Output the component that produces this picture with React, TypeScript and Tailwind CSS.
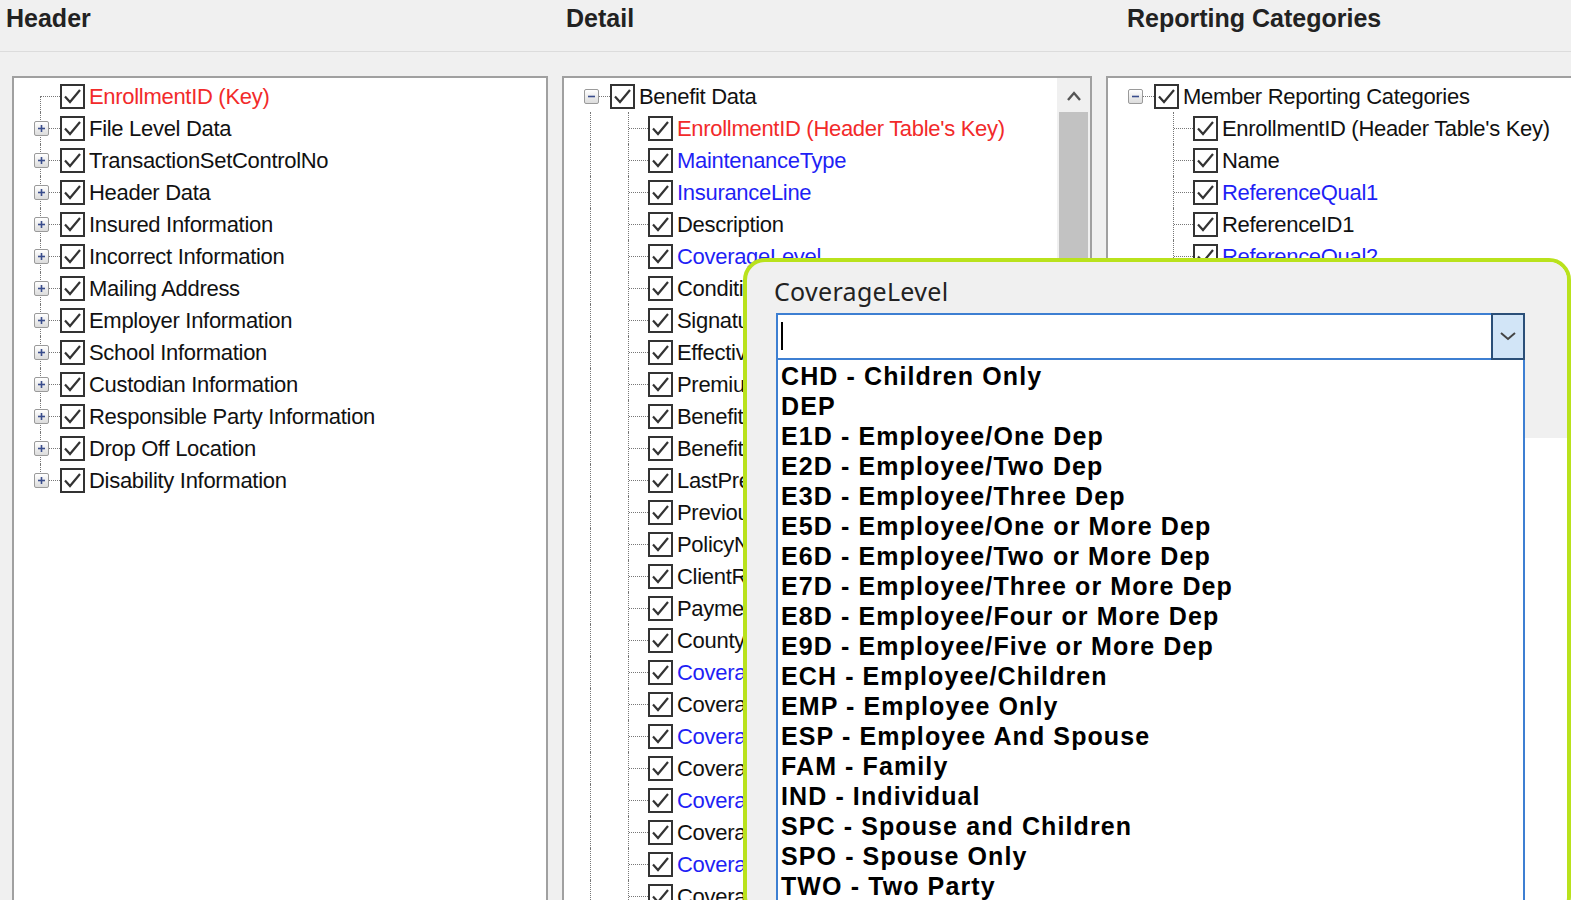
import React from 'react';

type Node = { label: string; color?: 'red' | 'blue'; children?: Node[]; expander?: '+' | '-' | null };

const HEADER: Node[] = [
  { label: 'EnrollmentID (Key)', color: 'red', expander: null },
  { label: 'File Level Data', expander: '+' },
  { label: 'TransactionSetControlNo', expander: '+' },
  { label: 'Header Data', expander: '+' },
  { label: 'Insured Information', expander: '+' },
  { label: 'Incorrect Information', expander: '+' },
  { label: 'Mailing Address', expander: '+' },
  { label: 'Employer Information', expander: '+' },
  { label: 'School Information', expander: '+' },
  { label: 'Custodian Information', expander: '+' },
  { label: 'Responsible Party Information', expander: '+' },
  { label: 'Drop Off Location', expander: '+' },
  { label: 'Disability Information', expander: '+' },
];

const DETAIL: Node[] = [
  { label: "EnrollmentID (Header Table's Key)", color: 'red' },
  { label: 'MaintenanceType', color: 'blue' },
  { label: 'InsuranceLine', color: 'blue' },
  { label: 'Description' },
  { label: 'CoverageLevel', color: 'blue' },
  { label: 'ConditionCode' },
  { label: 'SignatureDate' },
  { label: 'EffectiveDate' },
  { label: 'PremiumAmount' },
  { label: 'BenefitBeginDate' },
  { label: 'BenefitEndDate' },
  { label: 'LastPremiumPaidDate' },
  { label: 'PreviousPolicyNumber' },
  { label: 'PolicyNumber' },
  { label: 'ClientReportingCategory' },
  { label: 'PaymentPlan' },
  { label: 'CountyCode' },
  { label: 'CoverageLevelQual1', color: 'blue' },
  { label: 'CoverageLevelID1' },
  { label: 'CoverageLevelQual2', color: 'blue' },
  { label: 'CoverageLevelID2' },
  { label: 'CoverageLevelQual3', color: 'blue' },
  { label: 'CoverageLevelID3' },
  { label: 'CoverageLevelQual4', color: 'blue' },
  { label: 'CoverageLevelID4' },
];

const REPORTING: Node[] = [
  { label: "EnrollmentID (Header Table's Key)" },
  { label: 'Name' },
  { label: 'ReferenceQual1', color: 'blue' },
  { label: 'ReferenceID1' },
  { label: 'ReferenceQual2', color: 'blue' },
  { label: 'ReferenceID2' },
  { label: 'ReferenceQual3', color: 'blue' },
];

const OPTIONS = [
  'CHD - Children Only',
  'DEP',
  'E1D - Employee/One Dep',
  'E2D - Employee/Two Dep',
  'E3D - Employee/Three Dep',
  'E5D - Employee/One or More Dep',
  'E6D - Employee/Two or More Dep',
  'E7D - Employee/Three or More Dep',
  'E8D - Employee/Four or More Dep',
  'E9D - Employee/Five or More Dep',
  'ECH - Employee/Children',
  'EMP - Employee Only',
  'ESP - Employee And Spouse',
  'FAM - Family',
  'IND - Individual',
  'SPC - Spouse and Children',
  'SPO - Spouse Only',
  'TWO - Two Party',
];

function Check() {
  return (
    <div className="w-[25px] h-[25px] shrink-0 border-2 border-[#333] bg-white flex items-center justify-center">
      <svg width="19" height="19" viewBox="0 0 19 19">
        <path d="M2 9.5 L7 15 L17 3" fill="none" stroke="#333" strokeWidth="2.2" />
      </svg>
    </div>
  );
}

function Expander({ sign }: { sign: '+' | '-' }) {
  return (
    <div className="w-[15px] h-[15px] border border-[#9a9a9a] rounded-[2px] bg-gradient-to-b from-white to-[#dcdcdc] flex items-center justify-center relative z-10">
      <svg width="9" height="9" viewBox="0 0 9 9">
        <path d="M1 4.5 H8" stroke="#3a4d8c" strokeWidth="1.6" />
        {sign === '+' && <path d="M4.5 1 V8" stroke="#3a4d8c" strokeWidth="1.6" />}
      </svg>
    </div>
  );
}

// slot with tree lines: vertical dotted line + horizontal connector
function Slot({ v, sign, w = 'w-[22px]' }: { v: 'full' | 'bottom' | 'top' | 'none'; sign?: '+' | '-' | null; w?: string }) {
  return (
    <div className={'relative h-8 shrink-0 flex items-center ' + w}>
      {v !== 'none' && (
        <div
          className={
            'absolute left-[10px] border-l border-dotted border-[#777] ' +
            (v === 'full' ? 'top-0 bottom-0' : v === 'bottom' ? 'top-1/2 bottom-0' : 'top-0 bottom-1/2')
          }
        />
      )}
      <div className="absolute left-[11px] right-0 top-1/2 border-t border-dotted border-[#777]" />
      {sign && (
        <div className="w-[22px] flex justify-center">
          <Expander sign={sign} />
        </div>
      )}
    </div>
  );
}

function Label({ n }: { n: Node }) {
  const c = n.color === 'red' ? 'text-[#f22a2a]' : n.color === 'blue' ? 'text-[#1f1ff5]' : 'text-[#111]';
  return <span className={'ml-[4px] whitespace-nowrap tracking-[-0.3px] ' + c}>{n.label}</span>;
}

function Row({ children }: { children: React.ReactNode }) {
  return <div className="flex items-center h-8">{children}</div>;
}

function VLine() {
  return (
    <div className="relative w-[22px] h-8 shrink-0">
      <div className="absolute left-[10px] top-0 bottom-0 border-l border-dotted border-[#777]" />
    </div>
  );
}

const treeFont = { fontFamily: '"Liberation Sans", Arial, sans-serif' };

export default function App() {
  return (
    <div className="w-[1571px] h-[900px] bg-[#f0f0f0] overflow-hidden relative text-[22px]" style={treeFont}>
      <div className="flex h-[52px] items-start font-bold text-[25px] text-[#222] border-b border-[#dcdcdc]">
        <div className="w-[560px] pl-[6px]">Header</div>
        <div className="w-[560px] pl-[6px]">Detail</div>
        <div className="pl-[7px]">Reporting Categories</div>
      </div>

      <div className="flex pt-[24px] gap-[14px] pl-[12px]">
        {/* Header panel */}
        <div className="w-[536px] h-[830px] border-2 border-[#a0a0a0] bg-white pl-[16px] pt-[2px]">
          {HEADER.map((n, i) => (
            <Row key={i}>
              <Slot v={i === 0 ? 'bottom' : i === HEADER.length - 1 ? 'top' : 'full'} sign={n.expander} w="w-[30px]" />
              <Check />
              <Label n={n} />
            </Row>
          ))}
        </div>

        {/* Detail panel */}
        <div className="w-[530px] h-[830px] border-2 border-[#a0a0a0] bg-white flex">
          <div className="flex-1 pl-[16px] pt-[2px] overflow-hidden">
            <Row>
              <Slot v="none" sign="-" w="w-[30px]" />
              <Check />
              <Label n={{ label: 'Benefit Data' }} />
            </Row>
            {DETAIL.map((n, i) => (
              <Row key={i}>
                <VLine />
                <div className="w-[16px]" />
                <Slot v="full" w="w-[30px]" />
                <Check />
                <Label n={n} />
              </Row>
            ))}
          </div>
          <div className="w-[33px] bg-[#f0f0f0] flex flex-col items-center pt-[4px]">
            <svg width="16" height="28" viewBox="0 0 16 28">
              <path d="M2 18 L8 11 L14 18" fill="none" stroke="#555" strokeWidth="2.4" />
            </svg>
            <div className="w-[29px] h-[600px] bg-[#c2c2c2] mt-[2px]" />
          </div>
        </div>

        {/* Reporting panel */}
        <div className="flex-1 h-[830px] border-2 border-r-0 border-[#a0a0a0] bg-white pl-[16px] pt-[2px]">
          <Row>
            <Slot v="none" sign="-" w="w-[30px]" />
            <Check />
            <Label n={{ label: 'Member Reporting Categories' }} />
          </Row>
          {REPORTING.map((n, i) => (
            <Row key={i}>
              <div className="w-[39px]" />
              <Slot v="full" w="w-[30px]" />
              <Check />
              <Label n={n} />
            </Row>
          ))}
        </div>
      </div>

      {/* Dropdown popup */}
      <div className="absolute left-[743px] top-[258px] w-[828px] h-[660px] border-[4px] border-[#b9e21c] rounded-[22px] bg-[#f0f0f0] overflow-hidden">
        <div className="flex h-full">
          <div className="pl-[27px] pt-[11px] w-[778px]">
            <div className="text-[25px] text-[#222] tracking-[0.3px]" style={{ fontFamily: '"Noto Sans", Arial, sans-serif' }}>CoverageLevel</div>
            <div className="mt-[2px] ml-[2px] h-[47px] border-2 border-[#3d7fd2] bg-white flex">
              <div className="flex-1 flex items-center pl-[3px]">
                <div className="w-[2px] h-[28px] bg-black" />
              </div>
              <div className="w-[34px] bg-[#d2e5f7] border-2 border-[#2b4f78] -m-[2px] ml-0 flex items-center justify-center">
                <svg width="18" height="12" viewBox="0 0 18 12">
                  <path d="M2 3 L9 9 L16 3" fill="none" stroke="#444" strokeWidth="2" />
                </svg>
              </div>
            </div>
            <div className="ml-[2px] h-[600px] border-x-2 border-[#3d7fd2] bg-white pl-[3px] pt-[1px] font-bold text-[25px] text-black leading-[30px] tracking-[1.1px]" style={{ fontFamily: '"Liberation Sans", Arial, sans-serif' }}>
              {OPTIONS.map((o) => (
                <div key={o} className="whitespace-nowrap">{o}</div>
              ))}
            </div>
          </div>
          <div className="flex-1 flex flex-col">
            <div className="h-[176px] bg-[#f0f0f0]" />
            <div className="flex-1 bg-white" />
          </div>
        </div>
      </div>
    </div>
  );
}
